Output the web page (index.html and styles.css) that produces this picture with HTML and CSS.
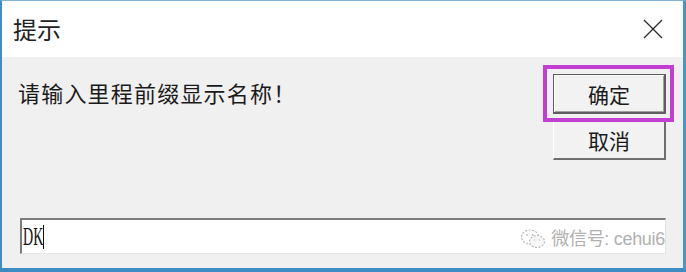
FILE: index.html
```html
<!DOCTYPE html>
<html lang="zh">
<head>
<meta charset="utf-8">
<title>提示</title>
<link rel="stylesheet" href="styles.css">
</head>
<body>
<div class="window">
  <div class="titlebar">
    <span class="title">提示</span>
    <svg class="close" width="20" height="20" viewBox="0 0 20 20">
      <path d="M1 1 L19 19 M19 1 L1 19" stroke="#2b2b2b" stroke-width="1.3" fill="none"/>
    </svg>
  </div>
  <div class="body">
    <div class="top">
      <div class="message">请输入里程前缀显示名称！</div>
      <div class="buttons">
        <div class="btn default">确定</div>
        <div class="btn">取消</div>
        <div class="highlight"></div>
      </div>
    </div>
    <div class="field">
      <span class="value"><span class="glyphs">DK</span></span><span class="caret"></span>
      <div class="watermark">
        <svg class="wx" width="26" height="22" viewBox="0 0 26 22">
          <ellipse cx="10" cy="9" rx="8.5" ry="7" fill="none" stroke="#b9b9b9" stroke-width="1.2" stroke-dasharray="2 1.5"/>
          <ellipse cx="17" cy="13.5" rx="7.5" ry="6" fill="#f7f7f7" stroke="#b9b9b9" stroke-width="1.2" stroke-dasharray="2 1.5"/>
          <circle cx="7" cy="7" r="1" fill="#c4c4c4"/>
          <circle cx="12.5" cy="7" r="1" fill="#c4c4c4"/>
          <circle cx="14.5" cy="12" r="0.8" fill="#c4c4c4"/>
          <circle cx="19.5" cy="12" r="0.8" fill="#c4c4c4"/>
        </svg>
        <span class="wm-text">微信号: cehui6</span>
      </div>
    </div>
  </div>
</div>
</body>
</html>
```
FILE: styles.css
```css
html, body {
  margin: 0;
  padding: 0;
  background: #f0f0f0;
}
.window {
  width: 686px;
  height: 272px;
  box-sizing: border-box;
  border-top: 1px solid #7fb2d6;
  border-left: 2px solid #3f8dc4;
  border-right: 3px solid #4a95c8;
  border-bottom: 4px solid #3c8bc2;
  display: flex;
  flex-direction: column;
  font-family: "Noto Sans CJK SC", "Noto Sans", sans-serif;
  color: #1b1b1b;
}
.titlebar {
  height: 56px;
  background: #ffffff;
  display: flex;
  align-items: center;
  justify-content: space-between;
  padding: 0 20px 0 11px;
  flex: none;
}
.title {
  font-size: 24px;
  line-height: 30px;
  color: #222;
}
.close {
  display: block;
}
.body {
  flex: 1;
  background: #f0f0f0;
  display: flex;
  flex-direction: column;
  padding: 0 17px 14px 16px;
}
.top {
  display: flex;
  justify-content: space-between;
  align-items: flex-start;
}
.message {
  margin-top: 20px;
  font-size: 22px;
  line-height: 30px;
  letter-spacing: 1.2px;
  color: #1a1a1a;
}
.buttons {
  margin-top: 17px;
  width: 113px;
  display: flex;
  flex-direction: column;
  gap: 7px;
  position: relative;
}
.btn {
  box-sizing: border-box;
  height: 39px;
  display: flex;
  align-items: center;
  justify-content: center;
  font-size: 21px;
  color: #1a1a1a;
  background: #f2f2f2;
  border-top: 1px solid #ffffff;
  border-left: 1px solid #ffffff;
  border-right: 2px solid #6e6e6e;
  border-bottom: 2px solid #6e6e6e;
}
.btn.default {
  height: 40px;
  border: 1px solid #5e5e5e;
  border-right-width: 2px;
  border-bottom-width: 2px;
  box-shadow: inset 1px 1px 0 #ffffff, inset -1px -1px 0 #a0a0a0;
}
.highlight {
  position: absolute;
  left: -10px;
  top: -9px;
  width: 123px;
  height: 49px;
  border: 4px solid #c23fd2;
  pointer-events: none;
}
.field {
  margin-top: auto;
  margin-left: 2px;
  height: 36px;
  box-sizing: border-box;
  background: #ffffff;
  border-top: 2px solid #7c7c7c;
  border-left: 2px solid #7c7c7c;
  border-right: 1px solid #e2e2e2;
  border-bottom: 1px solid #e6e6e6;
  position: relative;
  display: flex;
  align-items: center;
  padding-left: 1px;
}
.value {
  display: inline-block;
  width: 20px;
  font-family: "Liberation Serif", serif;
  font-size: 26px;
  line-height: 28px;
  color: #111;
}
.glyphs {
  display: inline-block;
  transform: scaleX(0.54);
  transform-origin: left center;
}
.caret {
  display: inline-block;
  width: 1px;
  height: 24px;
  background: #111;
}
.watermark {
  position: absolute;
  right: 0;
  top: 8px;
  display: flex;
  align-items: center;
  gap: 5px;
}
.wm-text {
  font-family: "Liberation Sans", "Noto Sans CJK SC", sans-serif;
  font-size: 18px;
  line-height: 22px;
  color: #b0b0b0;
  letter-spacing: -0.3px;
}
.wx {
  display: block;
}
```
